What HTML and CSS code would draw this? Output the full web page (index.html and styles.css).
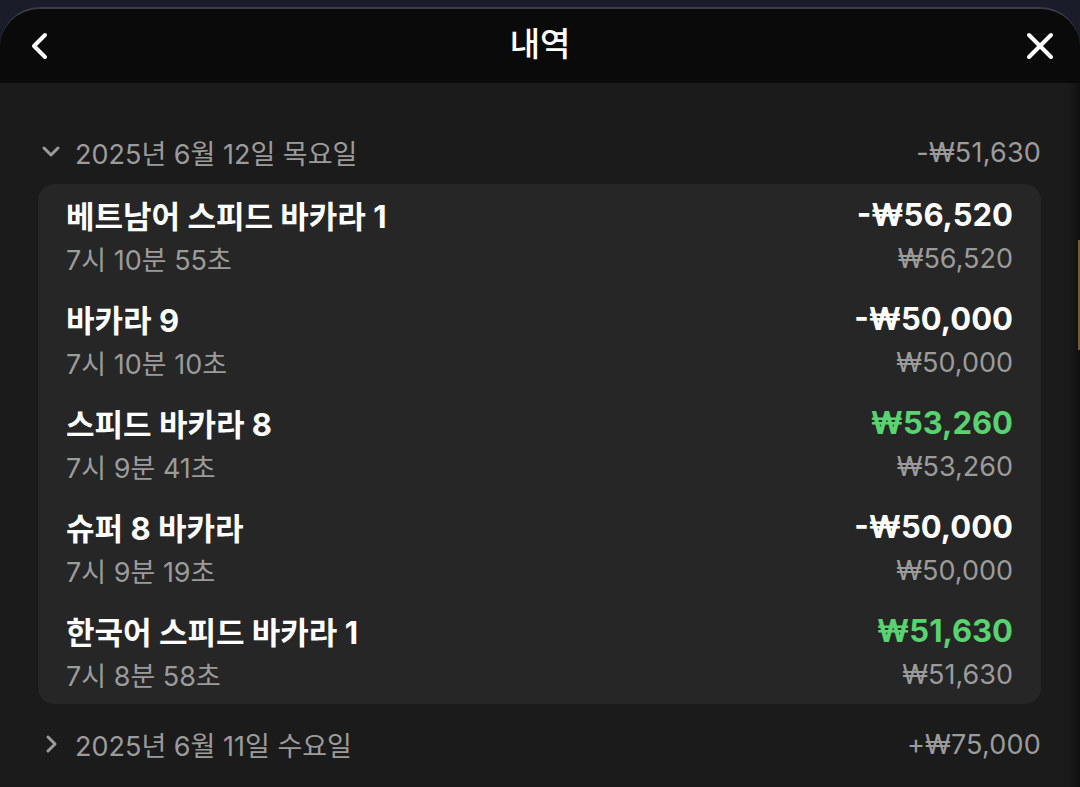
FILE: index.html
```html
<!DOCTYPE html>
<html lang="ko">
<head>
  <meta charset="UTF-8">
  <meta name="viewport" content="width=device-width, initial-scale=1.0">
  <title>내역</title>
  <link rel="stylesheet" href="styles.css">
</head>
<body>
<div class="sheet">
  <div class="header">
    <span class="icon-btn">
      <svg width="22" height="28" viewBox="0 0 22 28"><path d="M16 3 L5 14 L16 25" fill="none" stroke="#fff" stroke-width="4" stroke-linecap="round" stroke-linejoin="round"/></svg>
    </span>
    <h1>내역</h1>
    <span class="icon-btn">
      <svg width="28" height="28" viewBox="0 0 28 28"><path d="M3 3 L25 25 M25 3 L3 25" fill="none" stroke="#fff" stroke-width="4" stroke-linecap="round"/></svg>
    </span>
  </div>

  <div class="content">
    <div class="day">
      <div class="day-left">
        <svg class="chev" width="20" height="14" viewBox="0 0 20 14"><path d="M3 3 L10 10 L17 3" fill="none" stroke="#9b9b9b" stroke-width="3" stroke-linecap="round" stroke-linejoin="round"/></svg>
        <span>2025년 6월 12일 목요일</span>
      </div>
      <span class="day-total">-₩51,630</span>
    </div>

    <div class="card">
      <div class="row">
        <div class="line"><span class="game">베트남어 스피드 바카라 1</span><span class="amt">-₩56,520</span></div>
        <div class="line sub"><span>7시 10분 55초</span><span>₩56,520</span></div>
      </div>
      <div class="row">
        <div class="line"><span class="game">바카라 9</span><span class="amt">-₩50,000</span></div>
        <div class="line sub"><span>7시 10분 10초</span><span>₩50,000</span></div>
      </div>
      <div class="row">
        <div class="line"><span class="game">스피드 바카라 8</span><span class="amt win">₩53,260</span></div>
        <div class="line sub"><span>7시 9분 41초</span><span>₩53,260</span></div>
      </div>
      <div class="row">
        <div class="line"><span class="game">슈퍼 8 바카라</span><span class="amt">-₩50,000</span></div>
        <div class="line sub"><span>7시 9분 19초</span><span>₩50,000</span></div>
      </div>
      <div class="row">
        <div class="line"><span class="game">한국어 스피드 바카라 1</span><span class="amt win">₩51,630</span></div>
        <div class="line sub"><span>7시 8분 58초</span><span>₩51,630</span></div>
      </div>
    </div>

    <div class="day">
      <div class="day-left">
        <svg class="chev" width="20" height="20" viewBox="0 0 20 20"><path d="M7 3 L14 10 L7 17" fill="none" stroke="#9b9b9b" stroke-width="3" stroke-linecap="round" stroke-linejoin="round"/></svg>
        <span>2025년 6월 11일 수요일</span>
      </div>
      <span class="day-total">+₩75,000</span>
    </div>
  </div>
  <div class="scroll-mark"></div>
</div>
</body>
</html>
```

FILE: styles.css
```css
html, body {
  margin: 0;
  height: 100%;
}
body {
  background-color: #1b1c29;
  font-family: "Inter", "Noto Sans CJK KR", sans-serif;
  padding-top: 7px;
  box-sizing: border-box;
  overflow: hidden;
}
.sheet {
  position: relative;
  background-color: #1b1b1b;
  border-top: 2px solid #3b3c47;
  border-radius: 40px 40px 0 0;
  height: 100%;
  overflow: hidden;
  box-shadow: inset -10px 0 10px -6px rgba(0, 0, 0, 0.5);
}
.header {
  background-color: #0a0a0a;
  height: 74px;
  display: flex;
  align-items: center;
  justify-content: space-between;
  padding: 0 26px 0 26px;
}
.header h1 {
  margin: 0 0 8px;
  color: #fff;
  font-family: "Noto Sans CJK KR", sans-serif;
  font-size: 33px;
  font-weight: 500;
}
.icon-btn {
  display: flex;
  width: 28px;
  justify-content: center;
}
.content {
  padding: 37px 39px 0 38px;
}
.day {
  height: 64px;
  display: flex;
  align-items: center;
  justify-content: space-between;
  color: #9b9b9b;
  font-size: 27px;
}
.day-left {
  display: flex;
  align-items: center;
  gap: 14px;
}
.day-left .chev {
  margin-left: 3px;
}
.day-total {
  letter-spacing: 0.2px;
}
.card {
  background-color: #262626;
  border-radius: 16px;
  padding: 8px 28px;
  margin-bottom: 8px;
  display: flex;
  flex-direction: column;
  gap: 16px;
}
.line {
  height: 44px;
  display: flex;
  align-items: center;
  justify-content: space-between;
}
.game {
  color: #fff;
  font-size: 31px;
  font-weight: 700;
}
.amt {
  color: #fff;
  font-size: 31px;
  font-weight: 700;
}
.amt.win {
  color: #58d36f;
}
.sub {
  color: #9b9b9b;
  font-size: 27px;
}
.scroll-mark {
  position: absolute;
  right: 0;
  top: 231px;
  width: 2px;
  height: 110px;
  background-color: #7a5a2e;
}
```
